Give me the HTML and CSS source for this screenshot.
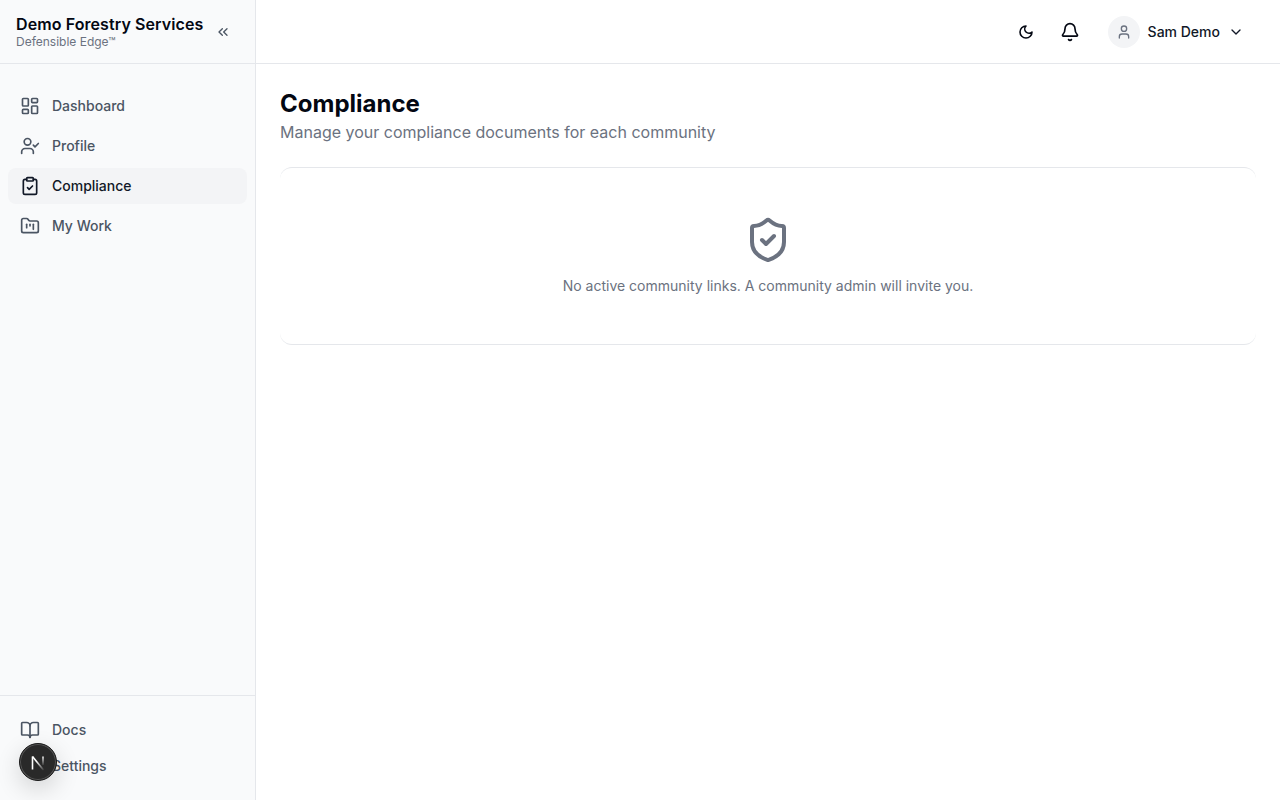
FILE: index.html
```html
<!DOCTYPE html>
<html lang="en">
<head>
    <meta charset="UTF-8">
    <meta name="viewport" content="width=device-width, initial-scale=1.0">
    <title>Compliance</title>
    <link rel="stylesheet" href="styles.css">
</head>
<body>
    <aside class="sidebar">
        <div class="brand">
            <div class="brand-text">
                <div class="brand-name">Demo Forestry Services</div>
                <div class="brand-sub">Defensible Edge™</div>
            </div>
            <svg class="collapse-icon" viewBox="0 0 24 24"><path d="m11 17-5-5 5-5"/><path d="m18 17-5-5 5-5"/></svg>
        </div>

        <nav class="nav-main">
            <a class="nav-item" href="#">
                <svg class="icon" viewBox="0 0 24 24"><rect x="3" y="3" width="7" height="9" rx="1"/><rect x="14" y="3" width="7" height="5" rx="1"/><rect x="14" y="12" width="7" height="9" rx="1"/><rect x="3" y="16" width="7" height="5" rx="1"/></svg>
                Dashboard
            </a>
            <a class="nav-item" href="#">
                <svg class="icon" viewBox="0 0 24 24"><path d="M16 21v-2a4 4 0 0 0-4-4H6a4 4 0 0 0-4 4v2"/><circle cx="9" cy="7" r="4"/><path d="m16 11 2 2 4-4"/></svg>
                Profile
            </a>
            <a class="nav-item active" href="#">
                <svg class="icon" viewBox="0 0 24 24"><rect x="8" y="2" width="8" height="4" rx="1"/><path d="M16 4h2a2 2 0 0 1 2 2v14a2 2 0 0 1-2 2H6a2 2 0 0 1-2-2V6a2 2 0 0 1 2-2h2"/><path d="m9 14 2 2 4-4"/></svg>
                Compliance
            </a>
            <a class="nav-item" href="#">
                <svg class="icon" viewBox="0 0 24 24"><path d="M4 20h16a2 2 0 0 0 2-2V8a2 2 0 0 0-2-2h-7.93a2 2 0 0 1-1.66-.9l-.82-1.2A2 2 0 0 0 7.93 3H4a2 2 0 0 0-2 2v13c0 1.1.9 2 2 2Z"/><path d="M8 10v4"/><path d="M12 10v2"/><path d="M16 10v6"/></svg>
                My Work
            </a>
        </nav>

        <nav class="nav-bottom">
            <a class="nav-item" href="#">
                <svg class="icon" viewBox="0 0 24 24"><path d="M12 7v14"/><path d="M3 18a1 1 0 0 1-1-1V4a1 1 0 0 1 1-1h5a4 4 0 0 1 4 4 4 4 0 0 1 4-4h5a1 1 0 0 1 1 1v13a1 1 0 0 1-1 1h-6a3 3 0 0 0-3 3 3 3 0 0 0-3-3z"/></svg>
                Docs
            </a>
            <a class="nav-item" href="#">
                <svg class="icon" viewBox="0 0 24 24"><circle cx="12" cy="12" r="3"/></svg>
                Settings
            </a>
        </nav>
    </aside>

    <div class="main">
        <header class="topbar">
            <svg class="top-icon moon" viewBox="0 0 24 24"><path d="M12 3a6 6 0 0 0 9 9 9 9 0 1 1-9-9Z"/></svg>
            <svg class="top-icon bell" viewBox="0 0 24 24"><path d="M10.268 21a2 2 0 0 0 3.464 0"/><path d="M3.262 15.326A1 1 0 0 0 4 17h16a1 1 0 0 0 .74-1.673C19.41 13.956 18 12.499 18 8A6 6 0 0 0 6 8c0 4.499-1.411 5.956-2.738 7.326"/></svg>
            <div class="user">
                <div class="avatar">
                    <svg viewBox="0 0 24 24"><path d="M19 21v-2a4 4 0 0 0-4-4H9a4 4 0 0 0-4 4v2"/><circle cx="12" cy="7" r="4"/></svg>
                </div>
                <span class="user-name">Sam Demo</span>
                <svg class="chevron" viewBox="0 0 24 24"><path d="m6 9 6 6 6-6"/></svg>
            </div>
        </header>

        <main class="content">
            <h1>Compliance</h1>
            <p class="page-sub">Manage your compliance documents for each community</p>

            <div class="card">
                <svg class="shield" viewBox="0 0 24 24"><path d="M20 13c0 5-3.5 7.5-7.66 8.95a1 1 0 0 1-.67-.01C7.5 20.5 4 18 4 13V6a1 1 0 0 1 1-1c2 0 4.5-1.2 6.24-2.72a1.17 1.17 0 0 1 1.52 0C14.51 3.81 17 5 19 5a1 1 0 0 1 1 1z"/><path d="m9 12 2 2 4-4"/></svg>
                <p class="empty-text">No active community links. A community admin will invite you.</p>
            </div>
        </main>
    </div>

    <!-- dev indicator, sits over the sidebar -->
    <div class="dev-badge">
        <svg viewBox="0 0 20 20">
            <defs>
                <linearGradient id="fadeDiagonal" gradientUnits="userSpaceOnUse" x1="9" y1="9" x2="15" y2="18">
                    <stop offset="0" stop-color="#fff"/>
                    <stop offset="1" stop-color="#fff" stop-opacity="0.1"/>
                </linearGradient>
                <linearGradient id="fadeStem" gradientUnits="userSpaceOnUse" x1="15" y1="4" x2="15" y2="13">
                    <stop offset="0" stop-color="#fff"/>
                    <stop offset="1" stop-color="#fff" stop-opacity="0.1"/>
                </linearGradient>
            </defs>
            <path class="dev-n" d="M4.5 17.5V4.5"/>
            <path class="dev-n diagonal" d="M4.5 4.5 15.5 18"/>
            <path class="dev-n stem" d="M15 4.5V13"/>
        </svg>
    </div>
</body>
</html>
```

FILE: styles.css
```css
* {
    box-sizing: border-box;
}
body {
    margin: 0;
    height: 800px;
    display: flex;
    overflow: hidden;
    font-family: Inter, "Liberation Sans", sans-serif;
    background-color: #fff;
    color: #030712;
    -webkit-font-smoothing: antialiased;
}
svg {
    fill: none;
    stroke: currentColor;
    stroke-width: 2;
    stroke-linecap: round;
    stroke-linejoin: round;
}
.sidebar {
    width: 256px;
    flex-shrink: 0;
    display: flex;
    flex-direction: column;
    background-color: #f9fafb;
    border-right: 1px solid #e5e7eb;
}
.brand {
    height: 64px;
    display: flex;
    align-items: center;
    justify-content: space-between;
    padding: 0 24px 0 16px;
    border-bottom: 1px solid #e5e7eb;
}
.brand-text {
    margin-bottom: 4px;
}
.brand-name {
    font-size: 16px;
    line-height: 24px;
    font-weight: 600;
    letter-spacing: 0.09px;
    color: #030712;
}
.brand-sub {
    font-size: 12px;
    line-height: 12px;
    color: #6b7280;
}
.collapse-icon {
    width: 16px;
    height: 16px;
    color: #4b5563;
}
.nav-main {
    flex: 1;
    display: flex;
    flex-direction: column;
    gap: 4px;
    padding: 24px 8px 0;
}
.nav-bottom {
    padding: 16px 8px;
    border-top: 1px solid #e5e7eb;
}
.nav-item {
    height: 36px;
    display: flex;
    align-items: center;
    gap: 12px;
    padding: 0 12px;
    border-radius: 8px;
    font-size: 14px;
    line-height: 20px;
    font-weight: 450;
    color: #4b5563;
    text-decoration: none;
}
.nav-item.active {
    background-color: #f3f4f6;
    color: #111827;
}
.icon {
    width: 20px;
    height: 20px;
    flex-shrink: 0;
}
.main {
    flex: 1;
    display: flex;
    flex-direction: column;
    min-width: 0;
}
.topbar {
    height: 64px;
    display: flex;
    align-items: center;
    padding: 0 36px 0 0;
    justify-content: flex-end;
    border-bottom: 1px solid #e5e7eb;
}
.top-icon {
    width: 20px;
    height: 20px;
    color: #030712;
}
.moon {
    width: 16px;
    height: 16px;
    margin-right: 26px;
    stroke-width: 2.4;
}
.bell {
    margin-right: 28px;
}
.user {
    display: flex;
    align-items: center;
}
.avatar {
    width: 32px;
    height: 32px;
    display: flex;
    align-items: center;
    justify-content: center;
    border-radius: 50%;
    background-color: #f3f4f6;
    color: #6b7280;
    margin-right: 8px;
}
.avatar svg {
    width: 16px;
    height: 16px;
}
.user-name {
    font-size: 14px;
    font-weight: 450;
    color: #111827;
    margin-right: 8px;
}
.chevron {
    width: 16px;
    height: 16px;
    color: #111827;
}
.content {
    flex: 1;
    padding: 24px;
}
h1 {
    margin: 0;
    font-size: 24px;
    line-height: 32px;
    font-weight: 700;
    color: #030712;
}
.page-sub {
    margin: 0;
    font-size: 16px;
    line-height: 24px;
    color: #6b7280;
}
.card {
    margin-top: 23px;
    height: 178px;
    padding-top: 48px;
    display: flex;
    flex-direction: column;
    align-items: center;
    border-top: 1px solid #e5e7eb;
    border-bottom: 1px solid #e5e7eb;
    border-radius: 12px;
}
.shield {
    width: 48px;
    height: 48px;
    color: #6b7280;
}
.empty-text {
    margin: 12px 0 0;
    font-size: 14px;
    line-height: 20px;
    color: #6b7280;
}
.dev-badge {
    position: fixed;
    left: 19px;
    bottom: 19px;
    width: 38px;
    height: 38px;
    display: flex;
    align-items: center;
    justify-content: center;
    border-radius: 50%;
    background-color: #292929;
    border: 1px solid #1a1a1a;
    box-shadow: inset 0 0 0 1px #555, 0 8px 24px rgba(0, 0, 0, 0.16);
}
.dev-badge svg {
    width: 20px;
    height: 20px;
}
.dev-n {
    stroke: #fff;
    stroke-width: 1.6;
    stroke-linecap: butt;
    stroke-linejoin: miter;
}
.dev-n.diagonal {
    stroke: url(#fadeDiagonal);
}
.dev-n.stem {
    stroke: url(#fadeStem);
}
```
